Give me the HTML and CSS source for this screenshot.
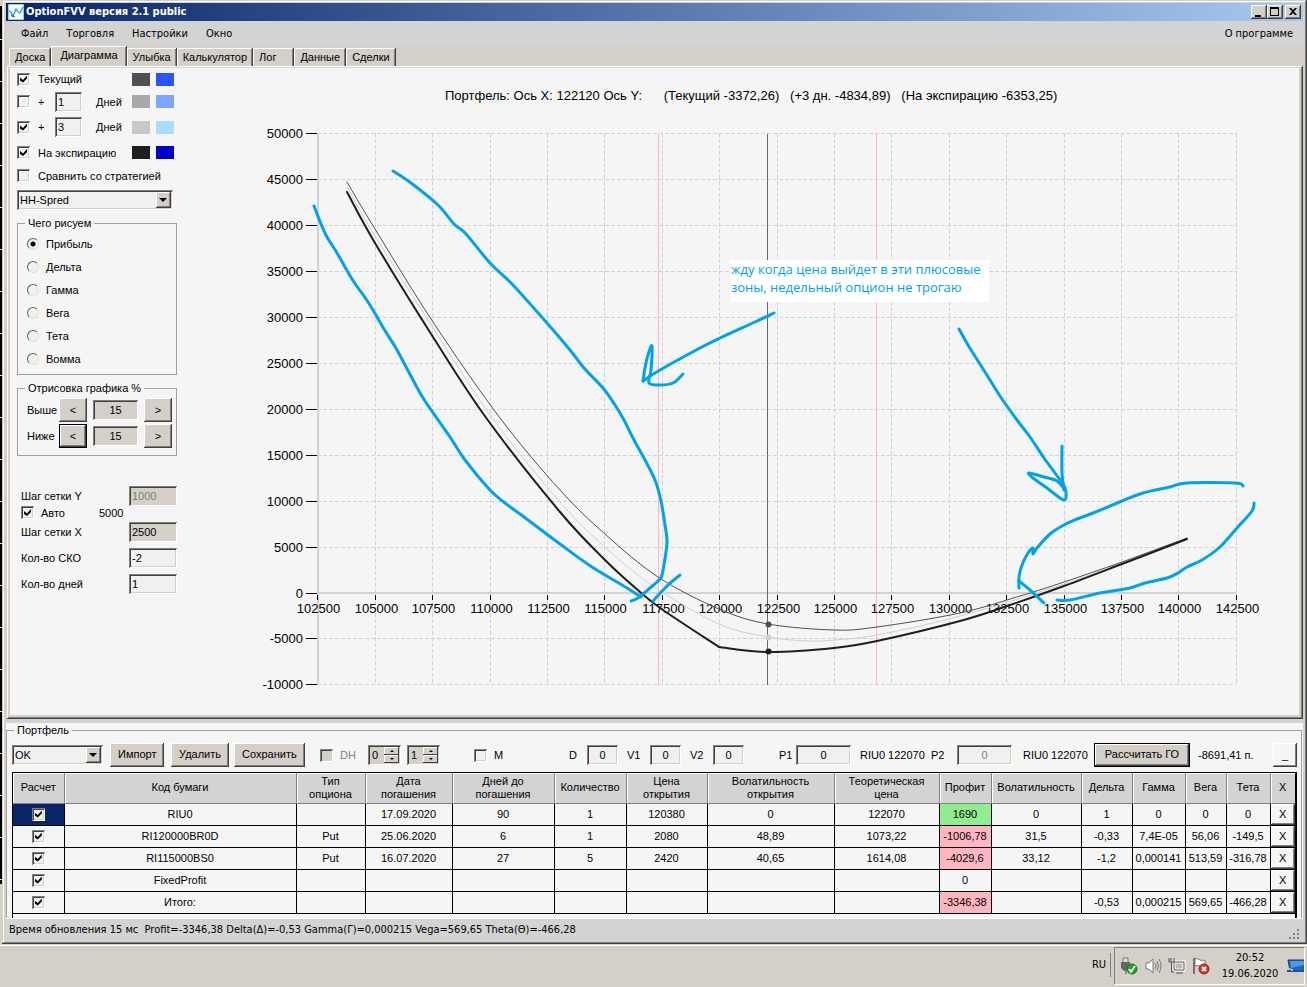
FILE: index.html
```html
<!DOCTYPE html>
<html lang="ru">
<head>
  <meta charset="UTF-8">
  <title>OptionFVV версия 2.1 public</title>
  <link rel="stylesheet" href="styles.css">
</head>
<body>

  <div class="desktop">
    <div class="backdrop"></div>

    <div class="window">
      <header class="titlebar">
        <svg class="app-icon" viewBox="0 0 16 16">
          <rect width="16" height="16" fill="#fff"/>
          <path d="M0 0H16V16H0Z" fill="none" stroke="#1b9be0" stroke-width="1"/>
          <path d="M1 7l2 1 2 4 3-7 2 3 2 1 3-6" fill="none" stroke="#1b9be0" stroke-width="1.3"/>
          <path d="M3 11l2 2 2-1" fill="none" stroke="#555" stroke-width="1"/>
        </svg>
        <span class="caption">OptionFVV версия 2.1 public</span>
        <button class="win-btn" aria-label="Свернуть"><svg viewBox="0 0 14 12"><path d="M3 9h6v2H3z"/></svg></button>
        <button class="win-btn" aria-label="Развернуть"><svg viewBox="0 0 14 12"><path d="M2 1h9v9H2zM3 3v6h7V3z" fill-rule="evenodd"/></svg></button>
        <button class="win-btn close" aria-label="Закрыть"><svg viewBox="0 0 14 12"><path d="M3 2h2l2 2 2-2h2L8 5.500l3 3.500H9L7 7 5 9H3l3-3.500z"/></svg></button>
      </header>

      <nav class="menu">
        <a href="#">Файл</a>
        <a href="#">Торговля</a>
        <a href="#">Настройки</a>
        <a href="#">Окно</a>
        <a href="#" class="about">О программе</a>
      </nav>

      <div class="tabs">
        <button class="tab">Доска</button>
        <button class="tab active">Диаграмма</button>
        <button class="tab">Улыбка</button>
        <button class="tab">Калькулятор</button>
        <button class="tab log">Лог</button>
        <button class="tab">Данные</button>
        <button class="tab">Сделки</button>
      </div>

      <main class="page">
        <aside class="sidebar">
          <div class="series">
            <input type="checkbox" id="cur" checked>
            <label class="wide" for="cur">Текущий</label>
            <i class="swatch c1"></i><i class="swatch c2"></i>
          </div>
          <div class="series">
            <input type="checkbox" id="plus1">
            <label class="plus-sign" for="plus1">+</label>
            <input type="text" class="field days" id="days1" value="1">
            <label class="unit" for="days1">Дней</label>
            <i class="swatch c3"></i><i class="swatch c4"></i>
          </div>
          <div class="series tall">
            <input type="checkbox" id="plus3" checked>
            <label class="plus-sign" for="plus3">+</label>
            <input type="text" class="field days" id="days3" value="3">
            <label class="unit" for="days3">Дней</label>
            <i class="swatch c5"></i><i class="swatch c6"></i>
          </div>
          <div class="series">
            <input type="checkbox" id="exp" checked>
            <label class="wide" for="exp">На экспирацию</label>
            <i class="swatch c7"></i><i class="swatch c8"></i>
          </div>
          <div class="series">
            <input type="checkbox" id="compare">
            <label for="compare">Сравнить со стратегией</label>
          </div>
          <div class="combo strategy">
            <select aria-label="Стратегия"><option>HH-Spred</option></select>
          </div>

          <fieldset class="group kinds">
            <legend>Чего рисуем</legend>
            <label><input type="radio" name="kind" checked>Прибыль</label>
            <label><input type="radio" name="kind">Дельта</label>
            <label><input type="radio" name="kind">Гамма</label>
            <label><input type="radio" name="kind">Вега</label>
            <label><input type="radio" name="kind">Тета</label>
            <label><input type="radio" name="kind">Вомма</label>
          </fieldset>

          <fieldset class="group range">
            <legend>Отрисовка графика %</legend>
            <div class="range-row">
              <label for="above">Выше</label>
              <button class="btn step">&lt;</button>
              <input type="text" class="field gray" id="above" value="15">
              <button class="btn step">&gt;</button>
            </div>
            <div class="range-row">
              <label for="below">Ниже</label>
              <button class="btn step focused">&lt;</button>
              <input type="text" class="field gray" id="below" value="15">
              <button class="btn step">&gt;</button>
            </div>
          </fieldset>

          <div class="grid-opts">
            <div class="opt first">
              <label for="stepY">Шаг сетки Y</label>
              <input type="text" class="field gray" id="stepY" value="1000" disabled>
            </div>
            <div class="opt auto">
              <input type="checkbox" id="auto" checked>
              <label for="auto">Авто</label>
              <span>5000</span>
            </div>
            <div class="opt">
              <label for="stepX">Шаг сетки X</label>
              <input type="text" class="field gray" id="stepX" value="2500">
            </div>
            <div class="opt">
              <label for="sko">Кол-во СКО</label>
              <input type="text" class="field" id="sko" value="-2">
            </div>
            <div class="opt">
              <label for="dayCount">Кол-во дней</label>
              <input type="text" class="field" id="dayCount" value="1">
            </div>
          </div>
        </aside>

        <svg class="chart" id="chart" viewBox="190 68 1109 647"></svg>
      </main>

      <section class="portfolio">
        <fieldset class="portfolio-box">
          <legend>Портфель</legend>
          <div class="toolbar">
            <div class="combo ok"><select aria-label="Портфель"><option>OK</option></select></div>
            <button class="btn">Импорт</button>
            <button class="btn">Удалить</button>
            <button class="btn">Сохранить</button>
            <label class="check off"><input type="checkbox" disabled>DH</label>
            <div class="spin">
              <input type="text" value="0" aria-label="DH 1">
              <button class="up" aria-label="Больше"></button><button class="down" aria-label="Меньше"></button>
            </div>
            <div class="spin">
              <input type="text" value="1" aria-label="DH 2">
              <button class="up" aria-label="Больше"></button><button class="down" aria-label="Меньше"></button>
            </div>
            <label class="check"><input type="checkbox">M</label>
            <label for="d">D</label>
            <input type="text" class="field small" id="d" value="0">
            <label for="v1">V1</label>
            <input type="text" class="field small" id="v1" value="0">
            <label for="v2">V2</label>
            <input type="text" class="field small" id="v2" value="0">
            <label for="p1">P1</label>
            <input type="text" class="field price" id="p1" value="0">
            <span>RIU0 122070</span>
            <label for="p2">P2</label>
            <input type="text" class="field price" id="p2" value="0" disabled>
            <span>RIU0 122070</span>
            <button class="btn focused calc">Рассчитать ГО</button>
            <span>-8691,41 п.</span>
            <button class="btn light hide">_</button>
          </div>

          <div class="table-wrap">
            <table class="positions">
              <colgroup>
                <col class="w51"><col><col class="w69"><col class="w87"><col class="w102"><col class="w72"><col class="w81"><col class="w127"><col class="w105"><col class="w52"><col class="w90"><col class="w51"><col class="w53"><col class="w41"><col class="w44"><col class="w25">
              </colgroup>
              <thead>
                <tr>
                  <th>Расчет</th><th>Код бумаги</th><th>Тип<br>опциона</th><th>Дата<br>погашения</th><th>Дней до<br>погашения</th><th>Количество</th><th>Цена<br>открытия</th><th>Волатильность<br>открытия</th><th>Теоретическая<br>цена</th><th>Профит</th><th>Волатильность</th><th>Дельта</th><th>Гамма</th><th>Вега</th><th>Тета</th><th>X</th>
                </tr>
              </thead>
              <tbody>
                <tr>
                  <td class="selected"><input type="checkbox" aria-label="RIU0" checked></td><td>RIU0</td><td></td><td>17.09.2020</td><td>90</td><td>1</td><td>120380</td><td>0</td><td>122070</td><td class="plus">1690</td><td>0</td><td>1</td><td>0</td><td>0</td><td>0</td><td class="del"><button class="btn light">X</button></td>
                </tr>
                <tr>
                  <td><input type="checkbox" aria-label="RI120000BR0D" checked></td><td>RI120000BR0D</td><td>Put</td><td>25.06.2020</td><td>6</td><td>1</td><td>2080</td><td>48,89</td><td>1073,22</td><td class="minus">-1006,78</td><td>31,5</td><td>-0,33</td><td>7,4E-05</td><td>56,06</td><td>-149,5</td><td class="del"><button class="btn light">X</button></td>
                </tr>
                <tr>
                  <td><input type="checkbox" aria-label="RI115000BS0" checked></td><td>RI115000BS0</td><td>Put</td><td>16.07.2020</td><td>27</td><td>5</td><td>2420</td><td>40,65</td><td>1614,08</td><td class="minus">-4029,6</td><td>33,12</td><td>-1,2</td><td>0,000141</td><td>513,59</td><td>-316,78</td><td class="del"><button class="btn light">X</button></td>
                </tr>
                <tr>
                  <td><input type="checkbox" aria-label="FixedProfit" checked></td><td>FixedProfit</td><td></td><td></td><td></td><td></td><td></td><td></td><td></td><td>0</td><td></td><td></td><td></td><td></td><td></td><td class="del"><button class="btn light">X</button></td>
                </tr>
                <tr>
                  <td><input type="checkbox" aria-label="Итого" checked></td><td>Итого:</td><td></td><td></td><td></td><td></td><td></td><td></td><td></td><td class="minus">-3346,38</td><td></td><td>-0,53</td><td>0,000215</td><td>569,65</td><td>-466,28</td><td class="del"><button class="btn light">X</button></td>
                </tr>
              </tbody>
            </table>
          </div>
        </fieldset>
      </section>

      <footer class="status">
        <span>Время обновления 15 мс&nbsp; Profit=-3346,38 Delta(Δ)=-0,53 Gamma(Γ)=0,000215 Vega=569,65 Theta(Θ)=-466,28</span>
        <svg class="grip" viewBox="0 0 12 12" fill="#808080"><path d="M8 0h2v2H8zM4 4h2v2H4zM8 4h2v2H8zM0 8h2v2H0zM4 8h2v2H4zM8 8h2v2H8z"/></svg>
      </footer>
    </div>
  </div>

  <div class="taskbar">
    <span class="lang">RU</span>
    <div class="tray">
      <svg viewBox="0 0 18 18">
        <path d="M3 1h5v5H3z" fill="#ddd" stroke="#777"/>
        <path d="M1 5h9v6l-2 3H4l-3-3z" fill="#666"/>
        <path d="M5 13h2v4H5z" fill="#888"/>
        <circle cx="12" cy="12" r="5" fill="#23a127" stroke="#157a18"/>
        <path d="M9 12l2 3 4-6" fill="none" stroke="#fff" stroke-width="1.800"/>
      </svg>
      <svg viewBox="0 0 18 18" fill="none" stroke="#777">
        <path d="M2 6h3l4-4v14l-4-4H2z" fill="#fff"/>
        <path d="M11 6q2 3 0 6M13 4q3 5 0 10M15 2q4 7 0 14"/>
      </svg>
      <svg viewBox="0 0 18 18" fill="none">
        <path d="M6 5h10v8H6z" fill="#bbb" stroke="#fff" stroke-width="3"/>
        <path d="M6 5h10v8H6zM8 16h7" stroke="#555"/>
        <path d="M1 1v4h5V1M3 1v3M3.500 5v10H6" stroke="#555"/>
      </svg>
      <svg viewBox="0 0 18 18">
        <path d="M2 1v16" stroke="#555" stroke-width="1.500"/>
        <path d="M3 2q3-1 5 1 3 1 5 0v7q-3 1-5-1-2-1-5 0z" fill="#fff" stroke="#777"/>
        <circle cx="12" cy="12" r="5" fill="#d9322b" stroke="#a51b16"/>
        <path d="M10 10l4 4M14 10l-4 4" stroke="#fff" stroke-width="1.800"/>
      </svg>
      <div class="clock">20:52<br>19.06.2020</div>
      <svg viewBox="0 0 18 18">
        <path d="M2 3h16v11H4z" fill="#1e66c4" stroke="#123f86"/>
        <path d="M4 4h14v4L5 11z" fill="#4d97e8"/>
        <path d="M1 13h17v2H1z" fill="#24508f"/>
        <path d="M3 11h2v2H3z" fill="#f2a51e"/><path d="M5 12h2v2H5z" fill="#7dd0ff"/>
      </svg>
    </div>
  </div>

  <script src="chart.js"></script>
</body>
</html>
```

FILE: styles.css
```css
* {
  box-sizing: border-box;
}

body {
  margin: 0;
  min-height: 100vh;
  display: flex;
  flex-direction: column;
  background: #d4d0c8;
  color: #000;
  font: 11px/14px "Liberation Sans", Arial, sans-serif;
}

input, select, button {
  font: inherit;
  color: inherit;
  margin: 0;
  border-radius: 0;
}

a {
  color: inherit;
  text-decoration: none;
}

.desktop {
  flex: 1;
  display: flex;
}

.backdrop {
  width: 2px;
  margin: 6px 0 60px;
  background: repeating-linear-gradient(#000 0 33px, #ddd 33px 34px, #000 34px 42px);
}

/* window */
.window {
  flex: 1;
  min-width: 0;
  display: flex;
  flex-direction: column;
  padding: 3px 4px;
  background: #d4d0c8;
  box-shadow: inset -1px -1px #404040, inset 1px 1px #d4d0c8, inset -2px -2px #808080, inset 2px 2px #fff;
}

.titlebar {
  display: flex;
  align-items: center;
  height: 18px;
  padding: 0 2px;
  background: linear-gradient(to right, #0a246a, #a6caf0);
}

.app-icon {
  width: 16px;
  height: 16px;
}

.caption {
  flex: 1;
  margin-left: 2px;
  color: #fff;
  font: bold 11px/16px "DejaVu Sans Condensed", "DejaVu Sans", sans-serif;
}

.win-btn {
  width: 16px;
  height: 14px;
  padding: 1px;
  border: 0;
  background: #d4d0c8;
  box-shadow: inset -1px -1px #404040, inset 1px 1px #fff, inset -2px -2px #808080;
}

.win-btn svg {
  display: block;
  width: 14px;
  height: 12px;
}

.win-btn.close {
  margin-left: 2px;
}

.menu {
  display: flex;
  align-items: center;
  gap: 18px;
  height: 25px;
  padding: 0 10px 0 15px;
  background: #d3d3d3;
  font: 11px/14px "DejaVu Sans Condensed", "DejaVu Sans", sans-serif;
}

.about {
  margin-left: auto;
}

.tabs {
  display: flex;
  align-items: flex-end;
  height: 20px;
  padding-left: 3px;
}

.tab {
  height: 18px;
  padding: 0 6px;
  border: 0;
  background: #d4d0c8;
  box-shadow: inset -1px 0 #404040, inset 1px 1px #fff, inset -2px 0 #808080;
}

.tab.active {
  height: 20px;
  padding: 0 9px 3px;
}

.tab.log {
  padding-right: 18px;
}

/* diagram page */
.page {
  flex: 1;
  display: flex;
  margin-left: 1px;
  padding: 2px 4px 4px 3px;
  box-shadow: inset -1px -1px #404040, inset 1px 1px #fff, inset -2px -2px #808080;
}

.sidebar {
  width: 180px;
  padding: 0 13px 0 7px;
  background: #f5f5f5;
}

input[type="checkbox"] {
  appearance: none;
  flex: none;
  width: 13px;
  height: 13px;
  padding: 3px;
  background: #f0f0f0;
  box-shadow: inset 1px 1px #808080, inset -1px -1px #fff, inset 2px 2px #404040, inset -2px -2px #d4d0c8;
}

input[type="checkbox"]:checked::before {
  content: "";
  display: block;
  width: 7px;
  height: 7px;
  background: #000;
  clip-path: polygon(0 29%, 43% 64%, 100% 0, 100% 43%, 43% 100%, 0 71%);
}

input[type="checkbox"]:disabled {
  background: #d4d0c8;
}

.field {
  width: 48px;
  height: 20px;
  padding: 0 3px;
  border: 0;
  background: #f0f0f0;
  box-shadow: inset 1px 1px #808080, inset -1px -1px #fff, inset 2px 2px #404040, inset -2px -2px #d4d0c8;
}

.field.gray {
  background: #d4d0c8;
}

.field:disabled {
  color: #808080;
}

.series {
  display: flex;
  align-items: center;
  height: 23px;
}

.series:first-child {
  height: 22px;
}

.series.tall {
  height: 28px;
}

.series input[type="checkbox"] {
  margin-right: 8px;
}

.series .wide {
  flex: none;
  width: 94px;
}

.plus-sign {
  flex: none;
  width: 17px;
}

.days {
  flex: none;
  width: 27px;
  margin-right: 14px;
}

.unit {
  flex: none;
  width: 36px;
}

.swatch {
  flex: none;
  width: 18px;
  height: 13px;
  margin-right: 6px;
}

.c1 { background: #505050; }
.c2 { background: #2a54ff; }
.c3 { background: #a9a9a9; }
.c4 { background: #7ba7ff; }
.c5 { background: #c8c8c8; }
.c6 { background: #aadcff; }
.c7 { background: #1e1e1e; }
.c8 { background: #0000cd; }

.combo {
  position: relative;
  height: 20px;
}

.combo select {
  appearance: none;
  display: block;
  width: 100%;
  height: 20px;
  padding: 0 3px;
  border: 0;
  background: #f0f0f0;
  box-shadow: inset 1px 1px #808080, inset -1px -1px #fff, inset 2px 2px #404040, inset -2px -2px #d4d0c8;
}

.combo::before {
  content: "";
  position: absolute;
  right: 2px;
  top: 2px;
  width: 15px;
  height: 16px;
  background: #d4d0c8;
  box-shadow: inset -1px -1px #404040, inset 1px 1px #fff, inset -2px -2px #808080;
  pointer-events: none;
}

.combo::after {
  content: "";
  position: absolute;
  right: 6px;
  top: 8px;
  border: 4px solid transparent;
  border-top-color: #000;
  border-bottom: 0;
  pointer-events: none;
}

.strategy {
  width: 156px;
  margin-top: 3px;
}

.group {
  min-width: 0;
  margin: 0;
  padding: 0 9px;
  border: 1px solid #a0a0a0;
}

.group legend {
  padding: 0 3px;
  margin-left: -2px;
}

.kinds {
  height: 159px;
  margin-top: 6px;
}

.kinds label {
  display: flex;
  align-items: center;
  height: 23px;
}

.kinds legend + label {
  margin-top: 2px;
}

input[type="radio"] {
  appearance: none;
  width: 12px;
  height: 12px;
  margin-right: 7px;
  border: 1px solid;
  border-color: #606060 #e4e0d8 #e4e0d8 #606060;
  border-radius: 50%;
  background: #f0f0f0;
}

input[type="radio"]:checked {
  background: radial-gradient(#000 0 2px, #f0f0f0 3px);
}

.range {
  height: 75px;
  margin-top: 6px;
}

.range-row {
  display: flex;
  align-items: center;
  height: 26px;
}

.range-row label {
  flex: none;
  width: 32px;
}

.range-row .field {
  flex: none;
  width: 45px;
  margin: 0 6px;
  text-align: center;
}

.range-row:nth-child(2) {
  margin-top: 2px;
}

.btn {
  flex: none;
  height: 24px;
  padding: 0 8px 2px;
  border: 0;
  background: #d4d0c8;
  box-shadow: inset -1px -1px #404040, inset 1px 1px #fff, inset -2px -2px #808080;
}

.btn.focused {
  border: 1px solid #000;
}

.btn.light {
  background: #f5f5f5;
}

.btn.step {
  width: 28px;
  padding: 0;
}

.grid-opts {
  margin-top: 30px;
  padding-left: 4px;
}

.opt {
  display: flex;
  align-items: center;
  height: 26px;
}

.opt.first {
  height: 20px;
}

.opt.auto {
  height: 13px;
}

.opt .field {
  margin-left: auto;
}

.opt.auto label {
  width: 58px;
  margin-left: 7px;
}

.chart {
  flex: 1;
  min-width: 0;
  background: #f5f5f5;
}

.chart text {
  font: 13px "Liberation Sans", Arial, sans-serif;
  white-space: pre;
}

.chart .note {
  font: 13px "Open Sans", "Noto Sans", sans-serif;
  fill: #00a2e8;
}

/* portfolio */
.portfolio {
  margin-top: 4px;
  background: #f5f5f5;
  box-shadow: 0 -4px #d3d3d3;
}

.portfolio-box {
  margin: 0 1px 0 0;
  padding: 6px 4px 0 5px;
  min-width: 0;
  border: 1px solid #a0a0a0;
  border-width: 1px 1px 0 1px;
}

.portfolio-box legend {
  margin-left: 2px;
  padding: 0 3px;
}

.toolbar {
  display: grid;
  grid-template-columns: 98px 61px 63px 86px 48px 39px 67px 95px 18px 40px 23px 40px 23px 66px 17px 64px 71px 26px 66px 71px 104px 1fr 24px;
  align-items: center;
  justify-items: start;
  height: 24px;
}

.toolbar .btn {
  white-space: nowrap;
}

.combo.ok {
  width: 91px;
}

.check {
  display: flex;
  align-items: center;
}

.check input[type="checkbox"] {
  margin-right: 7px;
}

.check.off {
  color: #808080;
}

.field.small,
.field.price {
  width: 31px;
  text-align: center;
}

.field.price {
  width: 55px;
}

.btn.calc {
  width: 96px;
}

.btn.hide {
  width: 24px;
  padding: 0;
}

.spin {
  display: grid;
  grid-template-columns: 14px 15px;
  grid-template-rows: 8px 8px;
  padding: 2px;
  background: #d4d0c8;
  box-shadow: inset 1px 1px #808080, inset -1px -1px #fff, inset 2px 2px #404040;
}

.spin input {
  grid-row: 1 / 3;
  width: 14px;
  padding: 0 0 0 2px;
  border: 0;
  background: none;
}

.spin button {
  display: flex;
  align-items: center;
  justify-content: center;
  padding: 0;
  border: 0;
  background: #d4d0c8;
  box-shadow: inset -1px -1px #404040, inset 1px 1px #fff;
}

.spin button::before {
  content: "";
  border: 2px solid transparent;
  border-bottom-color: #000;
  border-top: 0;
}

.spin .down::before {
  border-top: 2px solid #000;
  border-bottom: 0;
}

.table-wrap {
  margin-top: 5px;
  padding-bottom: 4px;
  border: 1px solid #000;
  border-width: 1px 2px 0 1px;
}

.positions {
  width: 100%;
  table-layout: fixed;
  border-collapse: collapse;
  text-align: center;
}

.positions th {
  height: 30px;
  padding: 0;
  border: 1px solid #808080;
  border-top: 0;
  box-shadow: inset 1px 1px #fff;
  background: #d3d3d3;
  font-weight: normal;
  line-height: 13px;
}

.positions td {
  height: 22px;
  padding: 0;
  border: 1px solid #000;
  white-space: nowrap;
}

.positions th:first-child,
.positions td:first-child {
  border-left: 0;
}

.positions th:last-child,
.positions td:last-child {
  border-right: 0;
}

.positions input {
  display: block;
  margin: 0 auto;
}

.positions .selected {
  background: #0a246a;
}

.positions .plus {
  background: #90ee90;
}

.positions .minus {
  background: #ffb6c1;
}

.del .btn {
  display: block;
  width: 100%;
  height: 21px;
  padding: 0;
}

.w25 { width: 25px; }
.w41 { width: 41px; }
.w44 { width: 44px; }
.w51 { width: 51px; }
.w52 { width: 52px; }
.w53 { width: 53px; }
.w69 { width: 69px; }
.w72 { width: 72px; }
.w81 { width: 81px; }
.w87 { width: 87px; }
.w90 { width: 90px; }
.w102 { width: 102px; }
.w105 { width: 105px; }
.w127 { width: 127px; }

.status {
  display: flex;
  align-items: center;
  justify-content: space-between;
  height: 23px;
  padding: 0 2px 0 3px;
  border-top: 1px solid #fff;
  background: #d3d3d3;
  font: 11px/14px "DejaVu Sans Condensed", "DejaVu Sans", sans-serif;
}

.grip {
  align-self: flex-end;
  width: 12px;
  height: 12px;
}

/* taskbar */
.taskbar {
  display: flex;
  justify-content: flex-end;
  height: 44px;
  padding: 3px 2px 0 0;
  box-shadow: inset 0 1px #d4d0c8, inset 0 2px #fff;
  font: 11px/16px "DejaVu Sans Condensed", "DejaVu Sans", sans-serif;
}

.lang {
  height: 24px;
  margin: 6px 3px 0 0;
  padding: 4px 4px 0 0;
  border-right: 1px solid #808080;
}

.tray {
  display: flex;
  align-items: center;
  gap: 6px;
  height: 38px;
  padding: 0 0 0 5px;
  border: 1px solid;
  border-color: #808080 #fff #fff #808080;
}

.tray svg {
  width: 18px;
  height: 18px;
}

.clock {
  width: 60px;
  margin-left: 4px;
  text-align: center;
}
```

FILE: chart.js
```js
const chart = document.getElementById("chart");
const NS = "http://www.w3.org/2000/svg";

const left = 317.4, top0 = 133, stepX = 57.4, stepY = 45.95;
const right = left + stepX * 16, bottom = top0 + stepY * 12;
const zeroY = top0 + stepY * 10;

function add(name, attrs, text) {
  const el = document.createElementNS(NS, name);
  for (const key in attrs) el.setAttribute(key, attrs[key]);
  if (text) el.textContent = text;
  chart.appendChild(el);
}

function line(x1, y1, x2, y2, stroke, extra) {
  add("line", Object.assign({ x1, y1, x2, y2, stroke, "shape-rendering": "crispEdges" }, extra));
}

// smooth path through all points
function curve(points, stroke, width) {
  let d = "M" + points[0];
  for (let i = 0; i < points.length - 1; i++) {
    const p0 = points[i - 1] || points[i];
    const p1 = points[i];
    const p2 = points[i + 1];
    const p3 = points[i + 2] || p2;
    d += "C" + (p1[0] + (p2[0] - p0[0]) / 6) + " " + (p1[1] + (p2[1] - p0[1]) / 6) +
      " " + (p2[0] - (p3[0] - p1[0]) / 6) + " " + (p2[1] - (p3[1] - p1[1]) / 6) + " " + p2[0] + " " + p2[1];
  }
  add("path", { d, fill: "none", stroke, "stroke-width": width, "stroke-linecap": "round", "stroke-linejoin": "round" });
}

add("text", { x: 445, y: 100 }, "Портфель: Ось X: 122120 Ось Y:      (Текущий -3372,26)   (+3 дн. -4834,89)   (На экспирацию -6353,25)");

// grid
for (let i = 1; i <= 16; i++) {
  const x = Math.round(left + stepX * i) + 0.5;
  line(x, top0, x, bottom, "#d3d3d3", { "stroke-dasharray": "4 2" });
}
for (let i = 0; i <= 12; i++) {
  const y = Math.round(top0 + stepY * i) + 0.5;
  line(left, y, right, y, "#d3d3d3", { "stroke-dasharray": "4 2" });
  line(306, y, 317, y, "#000");
  add("text", { x: 303, y: y + 4, "text-anchor": "end" }, String(50000 - i * 5000));
}
line(318, top0, 318, bottom, "#d3d3d3", { "stroke-width": 2 });
line(left, zeroY + 0.5, right, zeroY + 0.5, "#d3d3d3", { "stroke-width": 2 });

line(658.5, 134, 658.5, 685, "#ffb6c1");
line(876.5, 134, 876.5, 685, "#ffb6c1");
line(767.5, 134, 767.5, 685, "#606878");

for (let i = 0; i <= 16; i++) {
  const x = Math.round(left + stepX * i) + 0.5;
  line(x, 595, x, 600, "#000");
  add("text", { x: x + 1, y: 613, "text-anchor": "middle" }, String(102500 + i * 2500));
}

// +3 days
curve([[347, 187], [375, 236], [433, 328], [493, 419], [560, 502], [605, 547], [653, 586], [719, 624], [768, 637], [810, 641], [834, 640], [877, 635], [960, 616], [1064, 584], [1187, 539]], "#d0d0d0", 1);
// current
curve([[347, 182], [375, 229], [433, 322], [500, 418], [560, 490], [605, 534], [658, 577], [719, 609], [768, 624], [834, 630], [877, 627], [960, 613], [1020, 596], [1064, 582], [1122, 562], [1187, 538]], "#505050", 1);
// expiration
curve([[347, 192], [375, 243], [433, 337], [487, 419], [560, 512], [605, 560], [640, 592], [663, 610], [719, 647]], "#1e1e1e", 2);
curve([[719, 647], [768, 652], [834, 648], [877, 641], [960, 621], [1010, 605], [1064, 586], [1122, 564], [1187, 539]], "#1e1e1e", 2);

add("circle", { cx: 768.5, cy: 637.5, r: 3, fill: "#d0d0d0" });
add("circle", { cx: 768.5, cy: 624.5, r: 3, fill: "#505050" });
add("circle", { cx: 768.5, cy: 651.5, r: 3, fill: "#1e1e1e" });

// notes drawn by hand over the chart
const pen = "#00a2e8";
curve([[314, 206], [321, 224], [327, 237], [337, 253], [352, 279], [366, 299], [373, 310], [384, 329], [397, 350], [413, 380], [425, 401], [450, 437], [465, 460], [490, 490], [505, 503], [520, 514], [560, 544], [592, 567], [627, 588], [641, 597]], pen, 3);
curve([[393, 171], [411, 183], [438, 205], [454, 224], [466, 234], [490, 263], [512, 284], [547, 323], [570, 350], [584, 368], [603, 388], [615, 405], [624, 420], [634, 440], [645, 460], [655, 480], [661, 501], [665, 525], [667, 540], [666, 552], [662, 575], [658, 581], [650, 588], [638, 598], [631, 601]], pen, 3);
curve([[680, 575], [667, 586], [653, 601]], pen, 3);
curve([[774, 313], [755, 322], [720, 338], [700, 348], [660, 370], [643, 381]], pen, 3);
curve([[643, 381], [645, 368], [648, 355], [652, 346], [651, 370], [649, 383], [660, 385], [673, 383], [683, 374]], pen, 3);
curve([[959, 329], [968, 345], [985, 372], [1000, 396], [1017, 420], [1030, 437], [1044, 458], [1055, 473], [1065, 488], [1064, 500], [1047, 488], [1033, 478], [1029, 473], [1044, 477], [1057, 481], [1065, 490]], pen, 3);
curve([[1062, 446], [1062, 473], [1064, 490]], pen, 3);
curve([[1019, 588], [1019, 577], [1022, 565], [1028, 553], [1033, 548], [1033, 554], [1037, 548], [1050, 534], [1064, 525], [1077, 519], [1093, 513], [1122, 501], [1143, 493], [1170, 487], [1187, 483], [1235, 483], [1243, 486]], pen, 3);
curve([[1019, 581], [1030, 590], [1044, 603]], pen, 3);
curve([[1057, 600], [1070, 600], [1100, 593], [1130, 588], [1145, 583], [1167, 578], [1178, 573], [1187, 567], [1202, 560], [1220, 547], [1237, 528], [1252, 511], [1254, 503]], pen, 3);

add("rect", { x: 731, y: 260, width: 258, height: 42, fill: "#fff" });
add("text", { x: 731, y: 274, class: "note" }, "жду когда цена выйдет в эти плюсовые");
add("text", { x: 731, y: 292, class: "note" }, "зоны, недельный опцион не трогаю");
```
